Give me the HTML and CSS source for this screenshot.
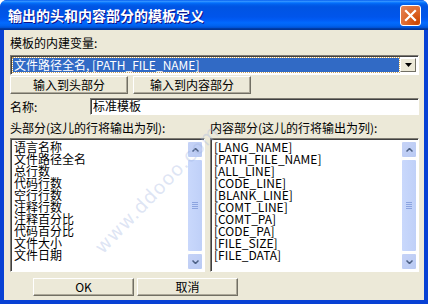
FILE: index.html
```html
<!DOCTYPE html>
<html lang="zh-CN">

<head>
    <meta charset="UTF-8">
    <title>输出的头和内容部分的模板定义</title>
    <link rel="stylesheet" href="styles.css">
</head>

<body>
    <div class="window">
        <div class="titlebar">
            <span class="title">输出的头和内容部分的模板定义</span>
            <span class="close">
                <svg width="13" height="13" viewBox="0 0 13 13">
                    <path d="M2 2 L11 11 M11 2 L2 11" stroke="#fff" stroke-width="2.2" stroke-linecap="square" />
                </svg>
            </span>
        </div>
        <div class="content">
            <div class="label first">模板的内建变量:</div>
            <div class="combo">
                <div class="combo-text"><span>文件路径全名, [PATH_FILE_NAME]</span></div>
                <div class="combo-btn">
                    <svg width="7" height="4" viewBox="0 0 7 4">
                        <path d="M0 0 H7 L3.5 4 Z" fill="#000" />
                    </svg>
                </div>
            </div>
            <div class="btn-row">
                <div class="btn btn-head">输入到头部分</div>
                <div class="btn btn-body">输入到内容部分</div>
            </div>
            <div class="name-row">
                <span class="name-label">名称:</span>
                <div class="input">标准模板</div>
            </div>
            <div class="lists">
                <div class="col col-left">
                    <div class="label">头部分(这儿的行将输出为列):</div>
                    <div class="listbox">
                        <ul>
                            <li>语言名称</li>
                            <li>文件路径全名</li>
                            <li>总行数</li>
                            <li>代码行数</li>
                            <li>空行行数</li>
                            <li>注释行数</li>
                            <li>注释百分比</li>
                            <li>代码百分比</li>
                            <li>文件大小</li>
                            <li>文件日期</li>
                        </ul>
                        <div class="scrollbar">
                            <div class="arrow">
                                <svg width="7" height="4" viewBox="0 0 7 4"><path d="M0.5 3.5 L3.5 0.5 L6.5 3.5" fill="none" stroke="#4d6185" stroke-width="1.5" /></svg>
                            </div>
                            <div class="thumb"><i></i><i></i><i></i><i></i></div>
                            <div class="arrow">
                                <svg width="7" height="4" viewBox="0 0 7 4"><path d="M0.5 0.5 L3.5 3.5 L6.5 0.5" fill="none" stroke="#4d6185" stroke-width="1.5" /></svg>
                            </div>
                        </div>
                    </div>
                </div>
                <div class="col col-right">
                    <div class="label">内容部分(这儿的行将输出为列):</div>
                    <div class="listbox">
                        <ul>
                            <li>[LANG_NAME]</li>
                            <li>[PATH_FILE_NAME]</li>
                            <li>[ALL_LINE]</li>
                            <li>[CODE_LINE]</li>
                            <li>[BLANK_LINE]</li>
                            <li>[COMT_LINE]</li>
                            <li>[COMT_PA]</li>
                            <li>[CODE_PA]</li>
                            <li>[FILE_SIZE]</li>
                            <li>[FILE_DATA]</li>
                        </ul>
                        <div class="scrollbar">
                            <div class="arrow">
                                <svg width="7" height="4" viewBox="0 0 7 4"><path d="M0.5 3.5 L3.5 0.5 L6.5 3.5" fill="none" stroke="#4d6185" stroke-width="1.5" /></svg>
                            </div>
                            <div class="thumb"><i></i><i></i><i></i><i></i></div>
                            <div class="arrow">
                                <svg width="7" height="4" viewBox="0 0 7 4"><path d="M0.5 0.5 L3.5 3.5 L6.5 0.5" fill="none" stroke="#4d6185" stroke-width="1.5" /></svg>
                            </div>
                        </div>
                    </div>
                </div>
            </div>
            <div class="footer">
                <div class="btn btn-ok">OK</div>
                <div class="btn btn-cancel">取消</div>
            </div>
        </div>
        <!-- 水印 -->
        <div class="watermark">www.ddooo.com</div>
    </div>
</body>

</html>
```

FILE: styles.css
```css
* {
    margin: 0;
    padding: 0;
    box-sizing: border-box;
}

body {
    background-color: #fff;
    font-family: "Noto Sans CJK SC", "DejaVu Sans", sans-serif;
    font-size: 12px;
    color: #000;
}

.window {
    position: relative;
    width: 428px;
    height: 304px;
    background-color: #0841d4;
    border-radius: 7px 7px 0 0;
    overflow: hidden;
    display: flex;
    flex-direction: column;
}

.titlebar {
    height: 30px;
    flex-shrink: 0;
    display: flex;
    align-items: center;
    justify-content: space-between;
    padding: 0 7px 0 8px;
    background: linear-gradient(#0058ee 0%, #3593ff 4%, #288eff 6%, #127dff 8%, #036ffc 10%, #0262ee 14%, #0057e5 20%, #0054e3 24%, #0055eb 56%, #005bf5 66%, #026afe 76%, #0062ef 86%, #0052d6 92%, #0040ab 94%, #003092 100%);
}

.title {
    color: #fff;
    font-size: 14px;
    font-weight: bold;
    line-height: 16px;
    text-shadow: 1px 1px #0f1089;
}

.close {
    width: 21px;
    height: 21px;
    border: 1px solid #fff;
    border-radius: 3px;
    background: radial-gradient(circle at 85% 85%, #cc4600 0%, #dc6527 45%, #e5855b 100%);
    display: flex;
    align-items: center;
    justify-content: center;
}

.content {
    flex: 1;
    margin: 0 4px 4px 4px;
    background-color: #ece9d8;
    padding: 6px 5px 0 6px;
    display: flex;
    flex-direction: column;
}

.label {
    height: 14px;
    line-height: 14px;
    white-space: nowrap;
}

.combo {
    margin-top: 5px;
    height: 20px;
    display: flex;
    background-color: #fff;
    border: 1px solid;
    border-color: #7f7c73 #fff #fff #7f7c73;
    box-shadow: inset 1px 1px #404040;
    padding: 2px;
}

.combo-text {
    flex: 1;
    padding-right: 1px;
}

.combo-text span {
    display: block;
    height: 14px;
    line-height: 14px;
    background-color: #316ac5;
    color: #fff;
    outline: 1px dotted #c9a35a;
    padding-left: 1px;
}

.combo-btn {
    width: 16px;
    background-color: #ece9d8;
    border: 1px solid;
    border-color: #fff #716f64 #716f64 #fff;
    display: flex;
    align-items: center;
    justify-content: center;
}

.btn-row {
    margin-top: 1px;
    display: flex;
    gap: 5px;
}

.btn {
    height: 18px;
    line-height: 15px;
    text-align: center;
    background-color: #ece9d8;
    border: 1px solid;
    border-color: #fff #716f64 #716f64 #fff;
    box-shadow: inset -1px -1px #aca899;
}

.btn-head,
.btn-body {
    width: 118px;
}

.name-row {
    margin-top: 4px;
    display: flex;
    align-items: center;
}

.name-label {
    width: 80px;
}

.input {
    flex: 1;
    height: 17px;
    line-height: 13px;
    background-color: #fff;
    border: 1px solid;
    border-color: #7f7c73 #fff #fff #7f7c73;
    box-shadow: inset 1px 1px #404040;
    padding-left: 2px;
}

.lists {
    margin-top: 6px;
    display: flex;
    gap: 5px;
}

.col-left {
    width: 195px;
}

.col-right {
    flex: 1;
}

.listbox {
    margin-top: 3px;
    height: 134px;
    display: flex;
    background-color: #fff;
    border: 1px solid;
    border-color: #7f7c73 #fff #fff #7f7c73;
    box-shadow: inset 1px 1px #404040;
    padding: 2px 1px 1px 2px;
}

.listbox ul {
    flex: 1;
    list-style: none;
    padding-left: 1px;
}

.listbox li {
    height: 12px;
    line-height: 12px;
    white-space: nowrap;
}

.scrollbar {
    width: 16px;
    display: flex;
    flex-direction: column;
    background-color: #fefefb;
}

.arrow {
    height: 17px;
    border: 1px solid #fff;
    border-radius: 2px;
    background: linear-gradient(135deg, #c6d3f7, #b9caf3);
    display: flex;
    align-items: center;
    justify-content: center;
}

.thumb {
    flex: 1;
    margin: 1px 0;
    border: 1px solid #fff;
    border-radius: 2px;
    background: linear-gradient(90deg, #c9d8fc, #bfd0f8);
    display: flex;
    flex-direction: column;
    align-items: center;
    justify-content: center;
    gap: 1px;
}

.thumb i {
    display: block;
    width: 6px;
    height: 1px;
    background-color: #8ca4e0;
}

.footer {
    margin-top: 6px;
    padding-left: 23px;
    display: flex;
    gap: 3px;
}

.btn-ok,
.btn-cancel {
    width: 101px;
}

.watermark {
    position: absolute;
    left: 72px;
    top: 178px;
    transform: rotate(-46deg);
    font-family: "DejaVu Sans", sans-serif;
    font-size: 19px;
    letter-spacing: 1px;
    color: rgba(160, 180, 225, 0.35);
    pointer-events: none;
}
```
